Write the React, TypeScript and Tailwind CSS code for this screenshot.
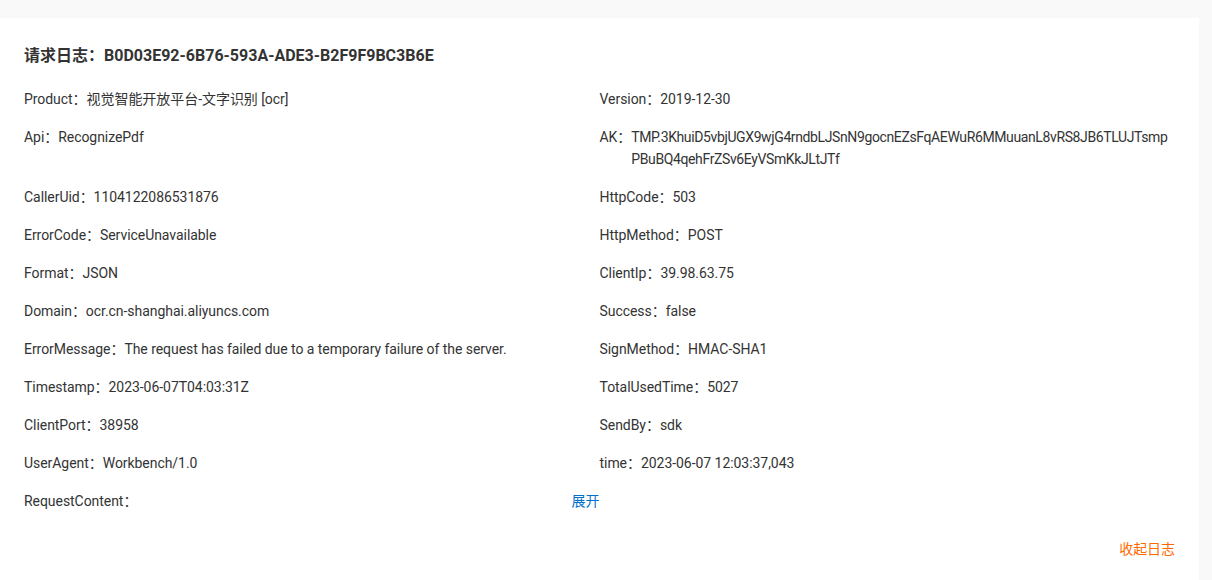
import React from "react";

const left: [string, string][] = [
  ["Product", "视觉智能开放平台-文字识别 [ocr]"],
  ["Api", "RecognizePdf"],
  ["CallerUid", "1104122086531876"],
  ["ErrorCode", "ServiceUnavailable"],
  ["Format", "JSON"],
  ["Domain", "ocr.cn-shanghai.aliyuncs.com"],
  ["ErrorMessage", "The request has failed due to a temporary failure of the server."],
  ["Timestamp", "2023-06-07T04:03:31Z"],
  ["ClientPort", "38958"],
  ["UserAgent", "Workbench/1.0"],
];

const right: [string, string][] = [
  ["Version", "2019-12-30"],
  ["AK", "TMP.3KhuiD5vbjUGX9wjG4rndbLJSnN9gocnEZsFqAEWuR6MMuuanL8vRS8JB6TLUJTsmpPBuBQ4qehFrZSv6EyVSmKkJLtJTf"],
  ["HttpCode", "503"],
  ["HttpMethod", "POST"],
  ["ClientIp", "39.98.63.75"],
  ["Success", "false"],
  ["SignMethod", "HMAC-SHA1"],
  ["TotalUsedTime", "5027"],
  ["SendBy", "sdk"],
  ["time", "2023-06-07 12:03:37,043"],
];

function Item({ k, v, tight }: { k: string; v: string; tight?: boolean }) {
  return (
    <div className="flex leading-[22px]">
      <span className="shrink-0">{k}：</span>
      <span className={tight ? "break-all tracking-[-0.38px]" : "break-all"}>{v}</span>
    </div>
  );
}

export default function App() {
  const rows = left.map((l, i) => [l, right[i]] as const);
  return (
    <div
      className="min-h-[580px] bg-[#f9f9f9] pt-[18px] pr-[13px] text-[#333333]"
      style={{ fontFamily: 'Roboto, "Noto Sans CJK SC", sans-serif' }}
    >
      <div className="bg-white px-[24px] pt-[26px] pb-[40px] text-[14px] tracking-[-0.05px]">
        <h1 className="text-[16px] font-bold leading-[24px] tracking-normal">
          请求日志：B0D03E92-6B76-593A-ADE3-B2F9F9BC3B6E
        </h1>
        <div className="mt-[20px] grid grid-cols-2 gap-y-[16px]">
          {rows.map(([l, r], i) => (
            <React.Fragment key={i}>
              <Item k={l[0]} v={l[1]} />
              <Item k={r[0]} v={r[1]} tight={r[0] === "AK"} />
            </React.Fragment>
          ))}
          <div className="flex justify-between leading-[22px]">
            <span>RequestContent：</span>
            <span className="text-[#0070cc] cursor-pointer">展开</span>
          </div>
          <div />
        </div>
        <div className="mt-[26px] flex justify-end leading-[22px]">
          <span className="text-[#ff6a00] cursor-pointer">收起日志</span>
        </div>
      </div>
    </div>
  );
}
